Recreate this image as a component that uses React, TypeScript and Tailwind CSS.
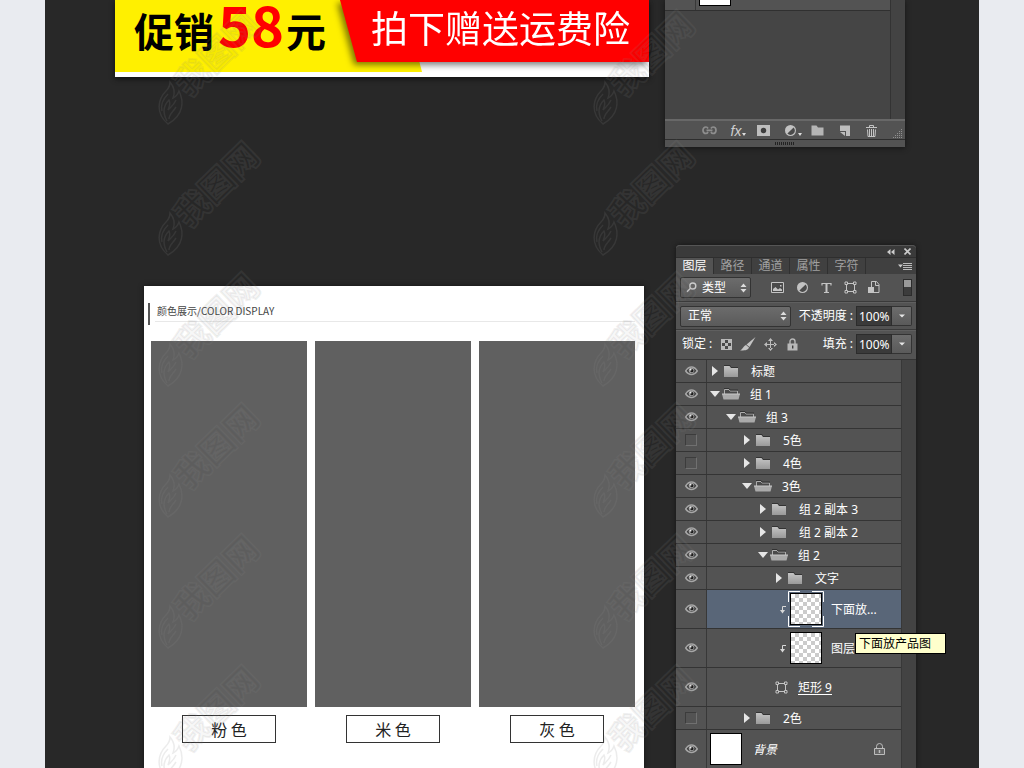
import React, { useState } from 'react';
import clsx from 'clsx';

type Kind = 'closed' | 'open' | 'clip' | 'shape' | 'background';

interface Layer {
  id: string;
  name: string;
  kind: Kind;
  level: number;
  visible: boolean;
  selected?: boolean;
  tooltip?: string;
}

const LAYERS: Layer[] = [
  { id: 'title', name: '标题', kind: 'closed', level: 0, visible: true },
  { id: 'g1', name: '组 1', kind: 'open', level: 0, visible: true },
  { id: 'g3', name: '组 3', kind: 'open', level: 1, visible: true },
  { id: 'c5', name: '5色', kind: 'closed', level: 2, visible: false },
  { id: 'c4', name: '4色', kind: 'closed', level: 2, visible: false },
  { id: 'c3', name: '3色', kind: 'open', level: 2, visible: true },
  { id: 'g2c3', name: '组 2 副本 3', kind: 'closed', level: 3, visible: true },
  { id: 'g2c2', name: '组 2 副本 2', kind: 'closed', level: 3, visible: true },
  { id: 'g2', name: '组 2', kind: 'open', level: 3, visible: true },
  { id: 'text', name: '文字', kind: 'closed', level: 4, visible: true },
  { id: 'below', name: '下面放...', kind: 'clip', level: 4, visible: true, selected: true, tooltip: '下面放产品图' },
  { id: 'layer', name: '图层', kind: 'clip', level: 4, visible: true },
  { id: 'rect', name: '矩形 9', kind: 'shape', level: 4, visible: true },
  { id: 'c2', name: '2色', kind: 'closed', level: 2, visible: false },
  { id: 'bg', name: '背景', kind: 'background', level: 0, visible: true },
];

const INDENT = ['pl-[3px]', 'pl-[19px]', 'pl-[35px]', 'pl-[51px]', 'pl-[67px]'];

const COLORS = ['粉 色', '米 色', '灰 色'];

/* ---------- icons ---------- */

function EyeIcon() {
  return (
    <svg width="13" height="10" viewBox="0 0 13 10" fill="none">
      <path d="M0.700 5C2.500 2 4.300 1 6.500 1s4 1 5.800 4C10.500 7.500 8.700 8.500 6.500 8.500S2.500 7.500 0.700 5z" stroke="#a6a6a6" strokeWidth="1.500" fill="#3a3a3a" />
      <circle cx="6.500" cy="4.500" r="2.800" fill="#a0a0a0" />
      <circle cx="6.900" cy="4.700" r="1.600" fill="#1c1c1c" />
      <circle cx="5.600" cy="3.700" r="0.900" fill="#eee" />
    </svg>
  );
}

function FolderIcon() {
  return (
    <svg width="16" height="14" viewBox="0 0 16 14">
      <defs>
        <linearGradient id="folder" x1="0" y1="0" x2="0" y2="1">
          <stop offset="0" stopColor="#c4c4c4" />
          <stop offset="1" stopColor="#9a9a9a" />
        </linearGradient>
      </defs>
      <path d="M0 1h6l1 2h7v2H0z" fill="#333" />
      <path d="M0 2h5.500l1.500 2h7v9H0z" fill="url(#folder)" />
    </svg>
  );
}

function OpenFolderIcon() {
  return (
    <svg width="18" height="14" viewBox="0 0 18 14">
      <path d="M2.500 7V2.500h4.500l1 1.500h7.500v3" fill="#4a4a4a" stroke="#adadad" />
      <path d="M2 1.500h5l1 1.500h8" fill="none" stroke="#333" />
      <path d="M0 7h18l-1.500 5.500h-15z" fill="#aaa" />
      <path d="M0 7h18" stroke="#c8c8c8" />
    </svg>
  );
}

function AdjustIcon() {
  return (
    <svg width="13" height="13" viewBox="0 0 13 13">
      <circle cx="6.500" cy="6.500" r="5.500" fill="#c2c2c2" />
      <path d="M3.400 9.600A4.300 4.300 0 0 0 9.600 3.400z" fill="#4a4a4a" />
    </svg>
  );
}

function ShapeIcon() {
  return (
    <svg width="13" height="13" viewBox="0 0 13 13" fill="#505050" stroke="#c4c4c4">
      <path d="M2.500 2.500h8v8h-8z" />
      <path d="M1 1h2.500v2.500H1zM9.500 1H12v2.500H9.500zM1 9.500h2.500V12H1zM9.500 9.500H12V12H9.500z" />
    </svg>
  );
}

function LockIcon() {
  return (
    <svg width="11" height="13" viewBox="0 0 11 13">
      <path d="M3 6V3.500a2.500 2.500 0 0 1 5 0V6" fill="none" stroke="#b8b8b8" strokeWidth="1.400" />
      <path d="M0.500 5.500h10V12.500h-10z" fill="#b8b8b8" />
      <path d="M5 7.500h1.400v3H5z" fill="#3c3c3c" />
    </svg>
  );
}

function LockOutlineIcon() {
  return (
    <svg width="11" height="13" viewBox="0 0 11 13" fill="none" stroke="#bdbdbd">
      <path d="M2.500 5V3.500a3 3 0 0 1 6 0V5" />
      <path d="M0.500 5.500h10v6h-10z" fill="#666" />
      <path d="M5.500 7v3" strokeWidth="1.500" />
    </svg>
  );
}

function UpDownIcon() {
  return (
    <svg width="7" height="10" viewBox="0 0 7 10" fill="#dcdcdc">
      <path d="M3.500 0.500L6.500 4h-6zM3.500 9.500L6.500 6h-6z" />
    </svg>
  );
}

function ClipArrow() {
  return (
    <svg width="7" height="9" viewBox="0 0 7 9" fill="none" stroke="#d8d8d8">
      <path d="M7 1.500H3.500V7" />
      <path d="M1 5h5L3.500 8.500z" fill="#d8d8d8" stroke="none" />
    </svg>
  );
}

function Checker({ size }: { size: 'sm' | 'lg' }) {
  if (size === 'sm') {
    return (
      <svg width="11" height="11" viewBox="0 0 11 11">
        <path d="M0 0h11v11H0z" fill="#b9b9b9" />
        <path d="M4 1h3v3H4zM1 4h3v3H1zM7 4h3v3H7zM4 7h3v3H4z" fill="#484848" />
      </svg>
    );
  }
  return (
    <div className="size-[30px] bg-[repeating-conic-gradient(#cbcbcb_0_25%,#ffffff_0_50%)] bg-[length:8px_8px]" />
  );
}

/* One rotated stamp: flame plus the site name */
function Stamp() {
  return (
    <svg width="110" height="120" viewBox="0 0 110 120" className="shrink-0 overflow-visible">
      <g fill="none" stroke="#8a8a8a" strokeOpacity="0.16" strokeWidth="1.500">
        <path d="M11 117C-2 106 1 92 9 84c3-3 4-5 4-9 5 6 5 11 3 16 4-2 5-4 6-7 5 10 5 24-11 33z" />
        <path d="M10 114c-5-9-3-16 2-21 2 4 0 7-1 10 3-3 6-5 8-10" />
        <path d="M12 112c0-5 4-7 7-12" />
        <path d="M5 104c-2-8 2-13 6-17" />
      </g>
      <text
        x="60"
        y="59"
        transform="rotate(-44 60 47)"
        textAnchor="middle"
        fontSize="34"
        fontWeight="700"
        fontFamily="'Noto Sans CJK SC', sans-serif"
        stroke="#8a8a8a"
        strokeOpacity="0.13"
        strokeWidth="2"
        fill="#111"
        fillOpacity="0.05"
      >
        我图网
      </text>
    </svg>
  );
}

function Watermarks() {
  return (
    <div aria-hidden="true" className="pointer-events-none absolute inset-0 z-20 flex gap-[325px] overflow-hidden pl-[157px] pt-[7px]">
      {[0, 1].map(col => (
        <div key={col} className="flex flex-col gap-[11px]">
          {[0, 1, 2, 3, 4, 5].map(row => (
            <Stamp key={row} />
          ))}
        </div>
      ))}
    </div>
  );
}

/* ---------- left side ---------- */

function Banner() {
  return (
    <div className="flex h-[77px] flex-1 items-start bg-white shadow-[0_2px_5px_#111] font-['Noto_Sans_CJK_SC',sans-serif]">
      <div className="grid w-[307px] shrink-0">
        <div className="col-start-1 row-start-1 h-[72px] bg-[#fff000] [clip-path:polygon(0_0,94%_0,100%_100%,0_100%)]" />
        <div className="z-10 col-start-1 row-start-1 flex items-baseline pl-[19px] font-bold leading-[46px] text-black">
          <span className="text-[40px]">促销</span>
          <span className="pl-[4px] pr-[2px] text-[56px] text-[#ff0000]">58</span>
          <span className="text-[40px]">元</span>
        </div>
      </div>
      <div className="-ml-[82px] flex-1 drop-shadow-[-3px_3px_3px_rgba(0,0,0,0.5)]">
        <div className="h-[62px] whitespace-nowrap bg-[#ff0000] pl-[31px] text-[37px] font-normal leading-[54px] text-white [clip-path:polygon(0_0,100%_0,100%_100%,17px_100%)]">
          拍下赠送运费险
        </div>
      </div>
    </div>
  );
}

function ColorCard() {
  return (
    <section className="mt-[41px] flex-1 bg-white pl-1 pr-[9px] pt-[17px] shadow-[0_0_5px_#151515] font-['Noto_Sans_CJK_SC',sans-serif]">
      <div className="flex h-[22px]">
        <div className="w-[2px] bg-[#555]" />
        <h2 className="ml-[5px] h-[19px] flex-1 border-b border-[#e8e8e8] pl-[2px] text-[10px] leading-[15px] text-[#444]">颜色展示/COLOR DISPLAY</h2>
      </div>
      <div className="mt-4 flex gap-2 pl-[3px]">
        {COLORS.map(color => (
          <div key={color} className="flex flex-1 flex-col items-center gap-2">
            <div className="h-[366px] w-full bg-[#606060]" />
            <div className="h-7 w-[94px] border border-[#333] text-center text-[16px] leading-[26px] text-[#222]">
              {color}
            </div>
          </div>
        ))}
      </div>
    </section>
  );
}

/* ---------- panels ---------- */

function IconButton({ label, className, children }: { label: string; className?: string; children: React.ReactNode }) {
  return (
    <button type="button" aria-label={label} className={clsx('flex items-center justify-center', className)}>
      {children}
    </button>
  );
}

function UpperPanel() {
  return (
    <section className="flex h-[147px] w-60 shrink-0 flex-col bg-[#454545] shadow-[0_1px_5px_#151515]">
      <div className="flex flex-1">
        <div className="flex-1">
          <div className="flex h-[11px] border-b border-[#303030] bg-[#535353]">
            <div className="w-[31px] border-r border-[#383838]" />
            <div className="ml-[3px] h-[6px] w-8 border border-t-0 border-black bg-white" />
          </div>
        </div>
        <div className="w-[15px] border-l border-[#333] bg-[#434343]" />
      </div>
      <div className="flex h-[21px] items-center border-b border-t-2 border-b-[#2e2e2e] border-t-[#686868] bg-[#535353] pl-[31px] pt-px">
        <IconButton label="链接图层" className="w-[27px]">
          <svg width="15" height="9" viewBox="0 0 15 9" fill="none" stroke="#8e8e8e" strokeWidth="1.700">
            <path d="M6 2.500C5.500 1.500 5 1 4 1 2 1 1 2.500 1 4.200S2 7.500 4 7.500c1 0 1.500-.5 2-1.500M9 2.500C9.500 1.500 10 1 11 1c2 0 3 1.500 3 3.200S13 7.500 11 7.500c-1 0-1.500-.5-2-1.500M4.500 4.300h6" />
          </svg>
        </IconButton>
        <IconButton label="图层样式" className="w-[27px]">
          <span className="pl-1 font-['Liberation_Sans',sans-serif] text-[14px] italic leading-4 text-[#cfcfcf]">fx</span>
          <svg width="4" height="3" viewBox="0 0 4 3" className="ml-px mt-2" fill="#ddd">
            <path d="M0 0h4L2 3z" />
          </svg>
        </IconButton>
        <IconButton label="添加蒙版" className="w-[27px]">
          <svg width="13" height="11" viewBox="0 0 13 11">
            <path d="M0 0h13v11H0z" fill="#bdbdbd" />
            <circle cx="6.500" cy="5.500" r="2.700" fill="#3d3d3d" />
          </svg>
        </IconButton>
        <IconButton label="调整图层" className="w-[27px] pl-1">
          <AdjustIcon />
          <svg width="4" height="3" viewBox="0 0 4 3" className="ml-px mt-2" fill="#ddd">
            <path d="M0 0h4L2 3z" />
          </svg>
        </IconButton>
        <IconButton label="新建组" className="w-[27px]">
          <svg width="13" height="11" viewBox="0 0 13 11">
            <path d="M0.500 0.500h5l1.500 2h5.500v8h-12z" fill="#b5b5b5" />
          </svg>
        </IconButton>
        <IconButton label="新建图层" className="w-[27px]">
          <svg width="10" height="11" viewBox="0 0 10 11" fill="#bdbdbd">
            <path d="M0 0.500h10V11H6V6H0z" />
            <path d="M0 7h5v4z" />
          </svg>
        </IconButton>
        <IconButton label="删除" className="w-[27px]">
          <svg width="11" height="12" viewBox="0 0 11 12" fill="none" stroke="#c4c4c4">
            <path d="M0 2.500h11M3.500 2V0.500h4V2M1.500 4.500l.5 7h7l.5-7M3.500 4v7M5.500 4v7M7.500 4v7" />
          </svg>
        </IconButton>
        <svg width="10" height="10" viewBox="0 0 10 10" className="ml-auto mr-[2px] self-end" fill="#8f8f8f">
          <path d="M8 0h1v1H8zM6 2h1v1H6zM8 2h1v1H8zM4 4h1v1H4zM6 4h1v1H6zM8 4h1v1H8zM2 6h1v1H2zM4 6h1v1H4zM6 6h1v1H6zM8 6h1v1H8zM0 8h1v1H0zM2 8h1v1H2zM4 8h1v1H4zM6 8h1v1H6zM8 8h1v1H8z" />
        </svg>
      </div>
      <div className="flex h-[7px] items-center justify-center bg-[#535353]">
        <div className="h-[3px] w-5 bg-[repeating-linear-gradient(90deg,#222_0_1px,#535353_1px_2px)]" />
      </div>
    </section>
  );
}

function Dropdown({ label, value, className, children }: { label: string; value: string; className: string; children?: React.ReactNode }) {
  return (
    <div className={clsx('relative flex items-center rounded-[2px] border border-[#333] bg-linear-to-b from-[#6c6c6c] to-[#5a5a5a]', className)}>
      {children}
      <select aria-label={label} defaultValue={value} className="w-full appearance-none bg-transparent leading-4 text-white outline-none">
        <option>{value}</option>
      </select>
      <div className="pointer-events-none absolute right-[3px]">
        <UpDownIcon />
      </div>
    </div>
  );
}

function PercentField({ id, label }: { id: string; label: string }) {
  return (
    <div className="ml-auto flex items-center">
      <label htmlFor={id} className="whitespace-nowrap">
        {label}<span className="px-[3px]">:</span>
      </label>
      <input id={id} defaultValue="100%" className="h-5 w-[36px] border border-[#2c2c2c] bg-[#3a3a3a] pl-[2px] text-[12px] text-white outline-none" />
      <IconButton label={label + '滑块'} className="h-5 w-5 rounded-r-[2px] border border-l-0 border-[#333] bg-linear-to-b from-[#6c6c6c] to-[#5a5a5a]">
        <svg width="6" height="4" viewBox="0 0 6 4" fill="#e6e6e6">
          <path d="M0 0.500h6L3 3.500z" />
        </svg>
      </IconButton>
    </div>
  );
}

function LayerIcon({ kind, selected }: { kind: Kind; selected?: boolean }) {
  if (kind === 'closed') {
    return (
      <div className="flex items-center">
        <svg width="10" height="10" viewBox="0 0 10 10" className="mr-1" fill="#e6e6e6">
          <path d="M2 0l6 5-6 5z" />
        </svg>
        <FolderIcon />
        <div className="w-[11px]" />
      </div>
    );
  }
  if (kind === 'open') {
    return (
      <div className="flex items-center">
        <svg width="10" height="10" viewBox="0 0 10 10" className="mr-[2px]" fill="#e6e6e6">
          <path d="M0 2h10L5 8z" />
        </svg>
        <OpenFolderIcon />
        <div className="w-[10px]" />
      </div>
    );
  }
  if (kind === 'clip') {
    return (
      <div className="flex items-center pl-[5px]">
        <ClipArrow />
        <div className="relative ml-1 mr-[9px] border border-black">
          <Checker size="lg" />
          {selected && (
            <svg width="36" height="36" viewBox="0 0 36 36" className="absolute -left-[3px] -top-[3px]" fill="none" stroke="#fff">
              <path d="M0.500 11V0.500H12M24 0.500h11.500V11M0.500 25v10.500H12M24 35.500h11.500V25" />
            </svg>
          )}
        </div>
      </div>
    );
  }
  if (kind === 'shape') {
    return (
      <div className="pl-px pr-[10px]">
        <ShapeIcon />
      </div>
    );
  }
  return <div className="mr-[11px] size-8 border border-black bg-white" />;
}

function LayerRow({ layer, onToggle }: { layer: Layer; onToggle: (id: string) => void }) {
  const folder = layer.kind === 'closed' || layer.kind === 'open';
  return (
    <li className={clsx('relative flex border-b border-[#343434]', folder ? 'h-[23px]' : 'h-[39px]')}>
      <button
        type="button"
        aria-label={layer.name + '可见性'}
        aria-pressed={layer.visible}
        onClick={() => onToggle(layer.id)}
        className="flex w-[31px] shrink-0 items-center justify-center border-r border-[#383838]"
      >
        {layer.visible ? <EyeIcon /> : <span className="size-3 border border-[#3c3c3c] border-b-[#707070] border-r-[#707070]" />}
      </button>
      <div className={clsx('flex min-w-0 flex-1 items-center', INDENT[layer.level], layer.selected && 'bg-[#596678]')}>
        <LayerIcon kind={layer.kind} selected={layer.selected} />
        <span className={clsx('whitespace-nowrap pt-[2px]', layer.kind === 'shape' && 'underline underline-offset-2', layer.kind === 'background' && 'italic')}>
          {layer.name}
        </span>
        {layer.kind === 'background' && (
          <span className="ml-auto mr-4">
            <LockOutlineIcon />
          </span>
        )}
      </div>
      {layer.tooltip && (
        <div role="tooltip" className="absolute left-[179px] top-[43px] z-10 h-[21px] w-[91px] whitespace-nowrap border border-black bg-[#ffffcc] pl-[3px] leading-[19px] text-black">
          {layer.tooltip}
        </div>
      )}
    </li>
  );
}

function LayersPanel() {
  const [layers, setLayers] = useState(LAYERS);

  const handleToggle = (id: string) => {
    setLayers(prev => prev.map(l => (l.id === id ? { ...l, visible: !l.visible } : l)));
  };

  return (
    <section className="flex w-60 shrink-0 flex-col rounded-t-[4px] bg-[#535353] text-[12px] leading-4 text-white shadow-[0_0_5px_#151515] font-['Noto_Sans','Noto_Sans_CJK_SC',sans-serif]">
      <div className="flex h-3 items-center justify-end gap-[9px] rounded-t-[4px] border-t border-[#555] bg-[#3a3a3a] pr-[5px]">
        <IconButton label="折叠">
          <svg width="8" height="6" viewBox="0 0 8 6" fill="#ccc">
            <path d="M3.500 0v6L0 3zM7.500 0v6L4 3z" />
          </svg>
        </IconButton>
        <IconButton label="关闭">
          <svg width="7" height="7" viewBox="0 0 7 7" stroke="#ccc" strokeWidth="1.600">
            <path d="M0.500 0.500l6 6M6.500 0.500l-6 6" />
          </svg>
        </IconButton>
      </div>

      <div className="flex h-[17px] border-t border-[#2e2e2e] bg-[#404040] text-[#a0a0a0]">
        {['图层', '路径', '通道', '属性', '字符'].map((tab, i) => (
          <button
            key={tab}
            type="button"
            className={clsx('w-[38px] border-r border-[#303030] text-center', i === 0 && 'bg-[#535353] text-white')}
          >
            {tab}
          </button>
        ))}
        <IconButton label="面板菜单" className="ml-auto mr-1">
          <svg width="14" height="9" viewBox="0 0 14 9">
            <path d="M0 2.500h5L2.500 5.500z" fill="#ccc" />
            <path d="M5 1.500h9M5 3.500h9M5 5.500h9M5 7.500h9" stroke="#bbb" />
          </svg>
        </IconButton>
      </div>

      <div className="flex h-7 items-center border-b border-[#3a3a3a] pl-1 pr-1">
        <Dropdown label="筛选" value="类型" className="h-[21px] w-[71px] gap-[5px] pl-[5px]">
          <svg width="11" height="11" viewBox="0 0 11 11" fill="none" stroke="#ccc" strokeWidth="1.400" className="shrink-0">
            <circle cx="6.800" cy="4" r="3" />
            <path d="M4.500 6.300L1 9.800" />
          </svg>
        </Dropdown>
        <div className="ml-[15px] flex">
          <IconButton label="像素" className="w-6">
            <svg width="14" height="12" viewBox="0 0 14 12">
              <path d="M0.500 0.500h12v10h-12z" fill="#4a4a4a" stroke="#c4c4c4" />
              <path d="M2 9V7l2.500-2L7 7.500 9 6l2 1.500V9z" fill="#c4c4c4" />
              <path d="M9 3h1.500v1.500H9z" fill="#c4c4c4" />
            </svg>
          </IconButton>
          <IconButton label="调整" className="w-6">
            <AdjustIcon />
          </IconButton>
          <IconButton label="文字" className="w-6">
            <svg width="11" height="12" viewBox="0 0 11 12" fill="none" stroke="#c4c4c4">
              <path d="M1 3.500V1.500h9v2" strokeWidth="1.200" />
              <path d="M5.500 1v10" strokeWidth="2" />
              <path d="M3 10.500h5" />
            </svg>
          </IconButton>
          <IconButton label="形状" className="w-6">
            <ShapeIcon />
          </IconButton>
          <IconButton label="智能对象" className="w-6">
            <svg width="12" height="13" viewBox="0 0 12 13">
              <path d="M3.500 0.500h5l2.500 3v8H3.500z" fill="#505050" stroke="#c4c4c4" />
              <path d="M7.500 0.500v4H11" fill="none" stroke="#c4c4c4" />
              <path d="M0 6h6v6H0z" fill="#c4c4c4" />
            </svg>
          </IconButton>
        </div>
        <button type="button" aria-label="筛选开关" className="ml-auto flex h-[17px] w-[9px] items-start border border-[#2c2c2c] bg-[#3c3c3c]">
          <span className="h-[7px] w-full bg-[#999]" />
        </button>
      </div>

      <div className="flex h-[28px] items-center border-b border-t border-b-[#3a3a3a] border-t-[#5f5f5f] pl-1 pr-1">
        <Dropdown label="混合模式" value="正常" className="h-[21px] w-[111px] pl-[7px]" />
        <PercentField id="opacity" label="不透明度" />
      </div>

      <div className="flex h-[30px] items-center border-b border-t border-b-[#343434] border-t-[#5f5f5f] pb-[2px] pl-[6px] pr-1">
        <span>锁定<span className="px-[3px]">:</span></span>
        <div className="flex">
          <IconButton label="锁定透明像素" className="w-[22px]">
            <Checker size="sm" />
          </IconButton>
          <IconButton label="锁定图像像素" className="w-[22px]">
            <svg width="16" height="14" viewBox="0 0 16 14" fill="#c4c4c4">
              <path d="M15.500 0L9.500 10 6.500 7.500z" />
              <path d="M6 8l3 2.500c-1 3-5 3-9 3C3 12.500 3 9 6 8z" />
            </svg>
          </IconButton>
          <IconButton label="锁定位置" className="w-[22px]">
            <svg width="13" height="13" viewBox="0 0 13 13" fill="#bdbdbd">
              <path d="M6 2h1v9H6zM2 6h9v1H2zM6.500 0L9 3H4zM6.500 13L9 10H4zM0 6.500L3 4v5zM13 6.500L10 4v5z" />
            </svg>
          </IconButton>
          <IconButton label="锁定全部" className="w-[22px]">
            <LockIcon />
          </IconButton>
        </div>
        <PercentField id="fill" label="填充" />
      </div>

      <div className="flex flex-1">
        <ul className="flex-1">
          {layers.map(layer => (
            <LayerRow key={layer.id} layer={layer} onToggle={handleToggle} />
          ))}
        </ul>
        <div className="w-[15px] border-l border-[#383838] bg-[#434343]" />
      </div>
    </section>
  );
}

export default function App() {
  return (
    <div className="relative h-screen overflow-hidden bg-[#e9ebf0] px-[45px]">
      <main className="flex h-full flex-col bg-[#282828]">
        <div className="flex items-start gap-4 pl-[70px] pr-[74px]">
          <Banner />
          <UpperPanel />
        </div>
        <div className="mt-[98px] flex flex-1 gap-8 pl-[99px] pr-[63px]">
          <ColorCard />
          <LayersPanel />
        </div>
      </main>
      <Watermarks />
    </div>
  );
}
